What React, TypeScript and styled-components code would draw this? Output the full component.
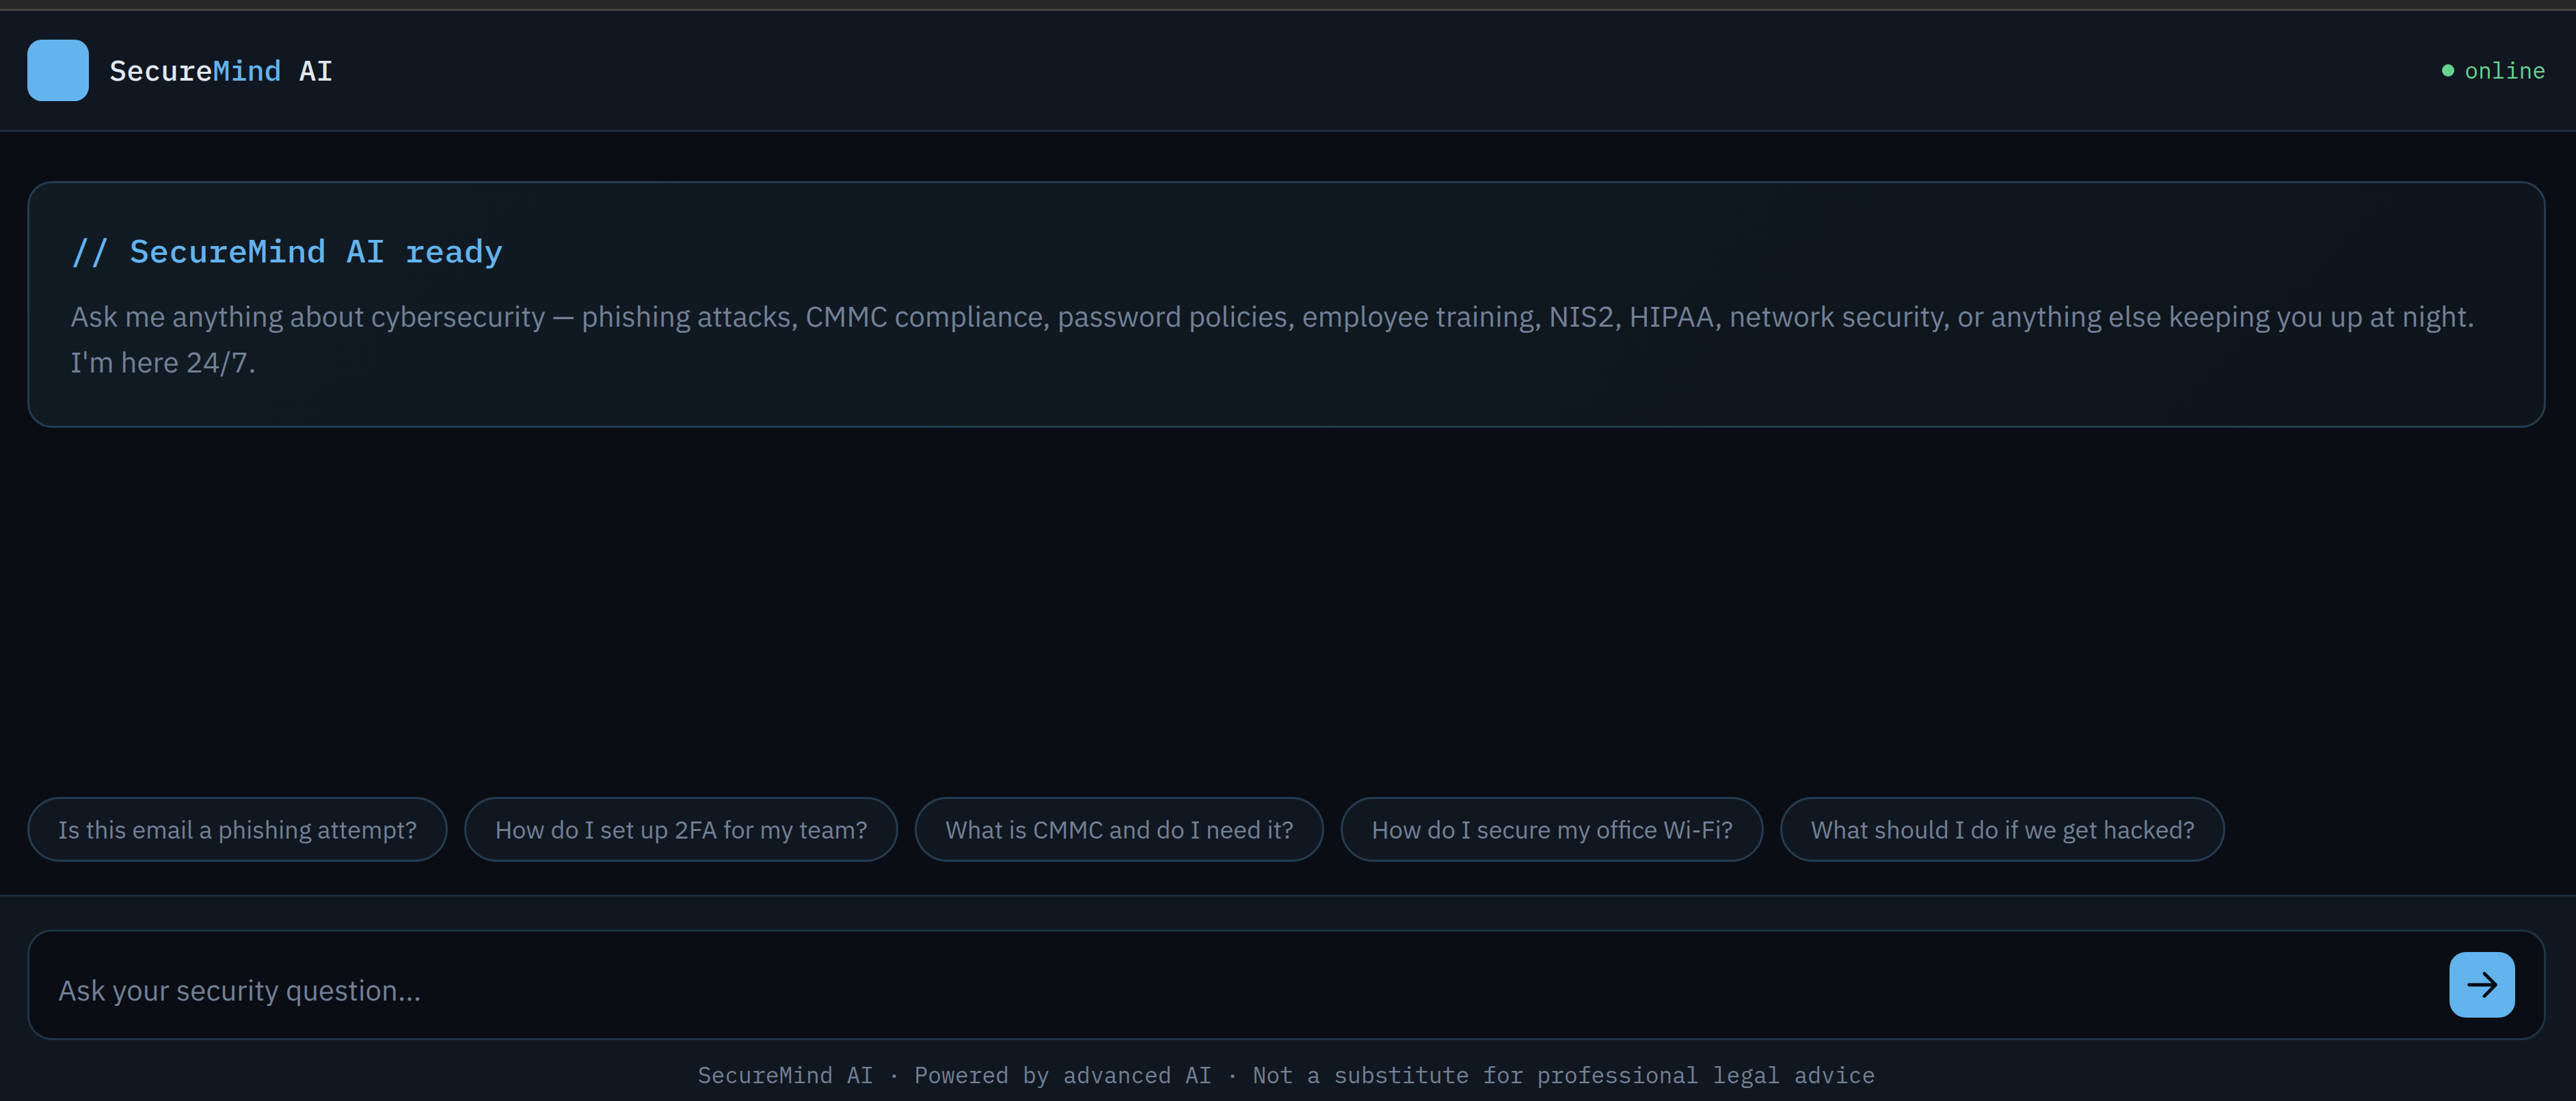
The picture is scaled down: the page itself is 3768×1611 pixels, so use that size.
import React, { useState } from "react";
import styled, { createGlobalStyle } from "styled-components";

const color = {
  page: "#0a0d14",
  surface: "#111720",
  line: "#1e2d3d",
  outline: "#243b4f",
  fieldOutline: "#1f3345",
  accent: "#63b3ed",
  online: "#68d391",
  text: "#e2e8f0",
  muted: "#718096",
};

const sans = '"IBM Plex Sans", "Liberation Sans", Arial, sans-serif';
const mono = '"IBM Plex Mono", "Liberation Mono", "Courier New", monospace';

const GlobalStyle = createGlobalStyle`
  *, *::before, *::after { box-sizing: border-box; }
  body {
    margin: 0;
    background: ${color.page};
    color: ${color.text};
    font-family: ${sans};
  }
`;

const Page = styled.div`
  display: flex;
  flex-direction: column;
  min-height: 100vh;
`;

const TopStrip = styled.div`
  height: 16px;
  background: #282828;
  border-bottom: 3px solid #444444;
`;

const Header = styled.header`
  display: flex;
  align-items: center;
  justify-content: space-between;
  padding: 42px 44px 42px 40px;
  background: ${color.surface};
  border-bottom: 3px solid ${color.line};
`;

const Brand = styled.div`
  display: flex;
  align-items: center;
  gap: 30px;
`;

const Logo = styled.div`
  width: 90px;
  height: 90px;
  border-radius: 21px;
  background: ${color.accent};
`;

const BrandName = styled.div`
  font-family: ${mono};
  font-size: 42px;
  font-weight: 500;
  line-height: 66px;
`;

const Accent = styled.span`
  color: ${color.accent};
`;

const Status = styled.div`
  display: flex;
  align-items: center;
  gap: 15px;
  color: ${color.online};
`;

const StatusDot = styled.span`
  width: 18px;
  height: 18px;
  border-radius: 50%;
  background: ${color.online};
`;

const StatusText = styled.span`
  font-family: ${mono};
  font-size: 33px;
  line-height: 52px;
`;

const Main = styled.main`
  flex: 1;
  display: flex;
  flex-direction: column;
  justify-content: space-between;
  gap: 48px;
  padding: 72px 44px 48px 40px;
`;

const WelcomeCard = styled.section`
  padding: 60px;
  border: 3px solid ${color.outline};
  border-radius: 36px;
  background: linear-gradient(135deg, #111b24, #0e141b);
`;

const WelcomeTitle = styled.h1`
  margin: 0 0 24px;
  color: ${color.accent};
  font-family: ${mono};
  font-size: 48px;
  font-weight: 500;
  line-height: 77px;
`;

const WelcomeText = styled.p`
  margin: 0;
  color: ${color.muted};
  font-size: 42px;
  line-height: 67px;
`;

const Suggestions = styled.div`
  display: flex;
  flex-wrap: wrap;
  gap: 24px;
`;

const Chip = styled.button`
  padding: 21px 42px;
  border: 3px solid ${color.outline};
  border-radius: 60px;
  background: ${color.surface};
  color: ${color.muted};
  font-family: ${sans};
  font-size: 36px;
  line-height: 47px;
  cursor: pointer;
`;

const Footer = styled.footer`
  padding: 48px 44px 17px 40px;
  background: ${color.surface};
  border-top: 3px solid ${color.line};
`;

const Composer = styled.form`
  display: flex;
  align-items: center;
  gap: 30px;
  padding: 30px 42px;
  border: 3px solid ${color.fieldOutline};
  border-radius: 36px;
  background: ${color.page};
`;

const QuestionInput = styled.input`
  flex: 1;
  min-width: 0;
  height: 96px;
  padding: 15px 0 0;
  border: 0;
  outline: 0;
  background: transparent;
  color: ${color.text};
  font-family: ${sans};
  font-size: 42px;

  &::placeholder {
    color: ${color.muted};
    opacity: 1;
  }
`;

const SendButton = styled.button`
  display: flex;
  align-items: center;
  justify-content: center;
  width: 96px;
  height: 96px;
  padding: 0;
  border: 0;
  border-radius: 24px;
  background: ${color.accent};
  color: ${color.page};
  cursor: pointer;
`;

const Disclaimer = styled.p`
  margin: 30px 0 0;
  color: ${color.muted};
  font-family: ${mono};
  font-size: 33px;
  line-height: 42px;
  text-align: center;
`;

const ArrowIcon = () => (
  <svg
    width="48"
    height="48"
    viewBox="0 0 16 16"
    fill="none"
    stroke="currentColor"
    strokeWidth="1.6"
    strokeLinecap="round"
    strokeLinejoin="round"
    aria-hidden="true"
  >
    <path d="M1.5 8h13M9 2.5L14.5 8 9 13.5" />
  </svg>
);

const suggestions = [
  "Is this email a phishing attempt?",
  "How do I set up 2FA for my team?",
  "What is CMMC and do I need it?",
  "How do I secure my office Wi-Fi?",
  "What should I do if we get hacked?",
];

export default function App() {
  const [question, setQuestion] = useState("");

  return (
    <Page>
      <GlobalStyle />
      <TopStrip />
      <Header>
        <Brand>
          <Logo />
          <BrandName>
            Secure<Accent>Mind</Accent> AI
          </BrandName>
        </Brand>
        <Status>
          <StatusDot />
          <StatusText>online</StatusText>
        </Status>
      </Header>
      <Main>
        <WelcomeCard>
          <WelcomeTitle>{"// SecureMind AI ready"}</WelcomeTitle>
          <WelcomeText>
            Ask me anything about cybersecurity — phishing attacks, CMMC compliance, password
            policies, employee training, NIS2, HIPAA, network security, or anything else keeping
            you up at night. I'm here 24/7.
          </WelcomeText>
        </WelcomeCard>
        <Suggestions>
          {suggestions.map((text) => (
            <Chip key={text} type="button" onClick={() => setQuestion(text)}>
              {text}
            </Chip>
          ))}
        </Suggestions>
      </Main>
      <Footer>
        <Composer onSubmit={(event) => event.preventDefault()}>
          <QuestionInput
            type="text"
            aria-label="Your security question"
            placeholder="Ask your security question..."
            value={question}
            onChange={(event) => setQuestion(event.target.value)}
          />
          <SendButton type="submit" aria-label="Send">
            <ArrowIcon />
          </SendButton>
        </Composer>
        <Disclaimer>
          SecureMind AI · Powered by advanced AI · Not a substitute for professional legal advice
        </Disclaimer>
      </Footer>
    </Page>
  );
}
